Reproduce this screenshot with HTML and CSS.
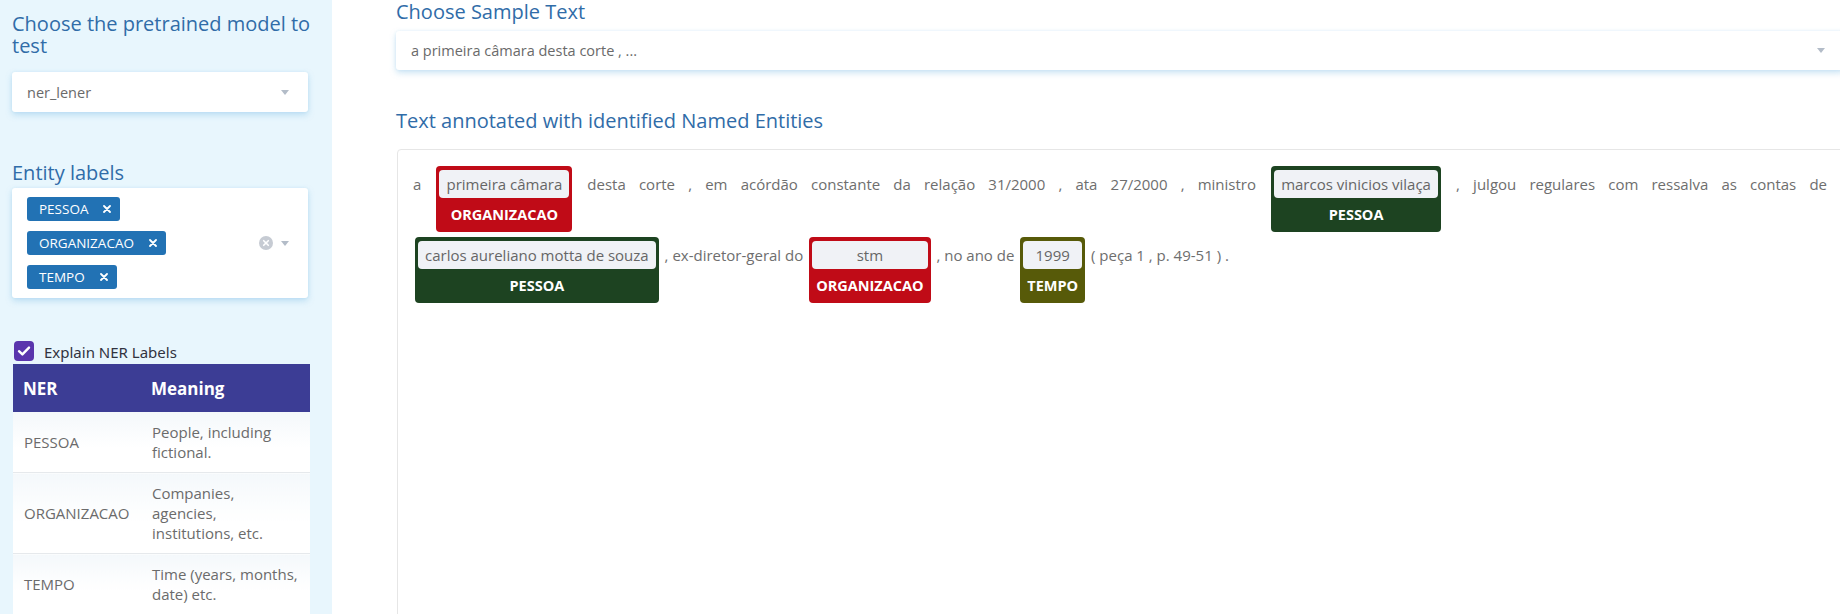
FILE: index.html
```html
<!DOCTYPE html>
<html lang="pt">
<head>
<meta charset="utf-8">
<title>NER demo</title>
<link rel="stylesheet" href="styles.css">
</head>
<body>
<div class="app">
  <aside class="sidebar">
    <h3 class="heading side-heading">Choose the pretrained model to test</h3>
    <div class="select side-select">
      <span class="select-value">ner_lener</span>
      <span class="caret"></span>
    </div>

    <h3 class="heading entity-heading">Entity labels</h3>
    <div class="multi">
      <div class="chips">
        <span class="chip">PESSOA<svg class="chip-x" width="8" height="8" viewBox="0 0 8 8"><path d="M1 1 L7 7 M7 1 L1 7" stroke="#fff" stroke-width="1.8" stroke-linecap="round"/></svg></span>
        <span class="chip">ORGANIZACAO<svg class="chip-x" width="8" height="8" viewBox="0 0 8 8"><path d="M1 1 L7 7 M7 1 L1 7" stroke="#fff" stroke-width="1.8" stroke-linecap="round"/></svg></span>
        <span class="chip">TEMPO<svg class="chip-x" width="8" height="8" viewBox="0 0 8 8"><path d="M1 1 L7 7 M7 1 L1 7" stroke="#fff" stroke-width="1.8" stroke-linecap="round"/></svg></span>
      </div>
      <div class="multi-controls">
        <svg class="clear" width="14" height="14" viewBox="0 0 14 14"><circle cx="7" cy="7" r="7" fill="#c6cbd3"/><path d="M4.7 4.7 L9.3 9.3 M9.3 4.7 L4.7 9.3" stroke="#fff" stroke-width="1.6" stroke-linecap="round"/></svg>
        <span class="caret"></span>
      </div>
    </div>

    <label class="check">
      <span class="box"><svg width="20" height="20" viewBox="0 0 20 20"><path d="M5 10.2 L8.4 13.4 L15 6.6" fill="none" stroke="#fff" stroke-width="2.4" stroke-linecap="round" stroke-linejoin="round"/></svg></span>
      <span class="check-text">Explain NER Labels</span>
    </label>

    <table class="ner">
      <thead>
        <tr><th class="c1">NER</th><th class="c2">Meaning</th></tr>
      </thead>
      <tbody>
        <tr><td>PESSOA</td><td>People, including<br>fictional.</td></tr>
        <tr><td>ORGANIZACAO</td><td>Companies,<br>agencies,<br>institutions, etc.</td></tr>
        <tr><td>TEMPO</td><td>Time (years, months,<br>date) etc.</td></tr>
      </tbody>
    </table>
  </aside>

  <main class="main">
    <div class="main-inner">
      <h3 class="heading">Choose Sample Text</h3>
      <div class="select main-select">
        <span class="select-value">a primeira câmara desta corte , ...</span>
        <span class="caret"></span>
      </div>

      <h3 class="heading annot-heading">Text annotated with identified Named Entities</h3>
      <div class="annot">a <span class="ent org"><span class="ent-text">primeira câmara</span><span class="ent-label">ORGANIZACAO</span></span> desta corte , em acórdão constante da relação 31/2000 , ata 27/2000 , ministro <span class="ent per"><span class="ent-text">marcos vinicios vilaça</span><span class="ent-label">PESSOA</span></span> , julgou regulares com ressalva as contas de <span class="ent per"><span class="ent-text">carlos aureliano motta de souza</span><span class="ent-label">PESSOA</span></span> , ex-diretor-geral do <span class="ent org"><span class="ent-text">stm</span><span class="ent-label">ORGANIZACAO</span></span> , no ano de <span class="ent tmp"><span class="ent-text">1999</span><span class="ent-label">TEMPO</span></span> ( peça 1 , p. 49-51 ) .</div>
    </div>
  </main>
</div>
</body>
</html>
```

FILE: styles.css
```css
html, body {
  margin: 0;
  padding: 0;
}

body {
  width: 1840px;
  height: 614px;
  overflow: hidden;
  background: #ffffff;
  font-family: "Open Sans", "Noto Sans", sans-serif;
  color: #666666;
}

.app {
  display: flex;
  height: 614px;
  overflow: hidden;
}

/* ---------- sidebar ---------- */
.sidebar {
  flex: none;
  width: 332px;
  box-sizing: border-box;
  padding: 13px 24px 0 12px;
  background: #e8f6fd;
}

.heading {
  margin: 0;
  font-size: 20px;
  line-height: 22px;
  font-weight: 400;
  color: #306ca8;
}

.side-heading {
  margin-right: -20px;
}

.select {
  display: flex;
  align-items: center;
  justify-content: space-between;
  background: #ffffff;
  border-radius: 3px;
  box-shadow: 0 3px 6px rgba(110, 180, 225, 0.35), 0 0 3px rgba(110, 180, 225, 0.15);
  box-sizing: border-box;
  padding: 0 19px 0 15px;
}

.select-value {
  font-size: 14.5px;
  color: #6a6a6a;
}

.side-select {
  margin-top: 15px;
  height: 40px;
}

.caret {
  width: 0;
  height: 0;
  border-left: 4.5px solid transparent;
  border-right: 4.5px solid transparent;
  border-top: 5px solid #b3bcc8;
}

.entity-heading {
  margin-top: 50px;
}

.multi {
  margin-top: 4px;
  display: flex;
  align-items: center;
  justify-content: space-between;
  background: #ffffff;
  border-radius: 3px;
  box-shadow: 0 3px 6px rgba(110, 180, 225, 0.35), 0 0 3px rgba(110, 180, 225, 0.15);
  padding: 9px 19px 9px 15px;
}

.chips {
  display: flex;
  flex-direction: column;
  align-items: flex-start;
  gap: 10px;
}

.chip {
  display: inline-flex;
  align-items: center;
  height: 24px;
  padding: 0 9px 0 12px;
  border-radius: 3px;
  background: #2272b4;
  color: #ffffff;
  font-size: 13.5px;
}

.chip-x {
  display: block;
  margin-left: 15px;
}

.multi-controls {
  display: flex;
  align-items: center;
  gap: 8px;
}

.clear {
  display: block;
}

.check {
  margin-top: 43px;
  height: 23px;
  display: flex;
  align-items: flex-start;
  gap: 10px;
  padding-left: 2px;
}

.box {
  width: 20px;
  height: 20px;
  border-radius: 4px;
  background: #5a35ad;
  display: block;
}

.box svg {
  display: block;
}

.check-text {
  font-family: "Noto Sans", sans-serif;
  font-size: 15px;
  line-height: 22px;
  color: #31333f;
}

.ner {
  margin-left: 1px;
  width: 297px;
  border-collapse: collapse;
  font-size: 15px;
}

.ner th {
  background: #3c3d95;
  color: #ffffff;
  text-align: left;
  font-weight: 700;
  font-size: 17px;
  height: 48px;
  padding: 0 10px;
}

.ner th.c1 {
  width: 108px;
}

.ner td {
  background: linear-gradient(#f4f8fb, #ffffff 60%);
  border-bottom: 1px solid #e6e9ec;
  padding: 10px 10px 10px 11px;
  line-height: 20px;
  color: #6b6b6b;
  vertical-align: middle;
}

/* ---------- main ---------- */
.main {
  flex: 1;
  min-width: 0;
  padding-left: 64px;
  padding-top: 1px;
}

.main-inner {
  width: 1448px;
}

.main-select {
  margin-top: 8px;
  height: 39px;
}

.annot-heading {
  margin-top: 40px;
}

.annot {
  margin-top: 17px;
  margin-left: 1px;
  min-height: 520px;
  border: 1px solid #e6e6e6;
  border-radius: 4px;
  padding: 16px 16px 0 15px;
  text-align: justify;
  font-size: 15px;
  line-height: 22px;
  color: #6e6e6e;
}

.ent {
  display: inline-flex;
  flex-direction: column;
  margin: 0 2px 5px;
  padding: 4px 3px 0;
  border-radius: 4px;
  text-align: center;
}

.ent-text {
  background: #f0f2f6;
  border-radius: 4px;
  height: 28px;
  line-height: 28px;
  padding: 0 7px;
  color: #666666;
}

.ent-label {
  height: 34px;
  line-height: 34px;
  padding: 0 4px;
  color: #ffffff;
  font-weight: 700;
  font-size: 14.5px;
}

.org {
  background: #c00b17;
}

.per {
  background: #1d4321;
}

.tmp {
  background: #575a09;
}
```
